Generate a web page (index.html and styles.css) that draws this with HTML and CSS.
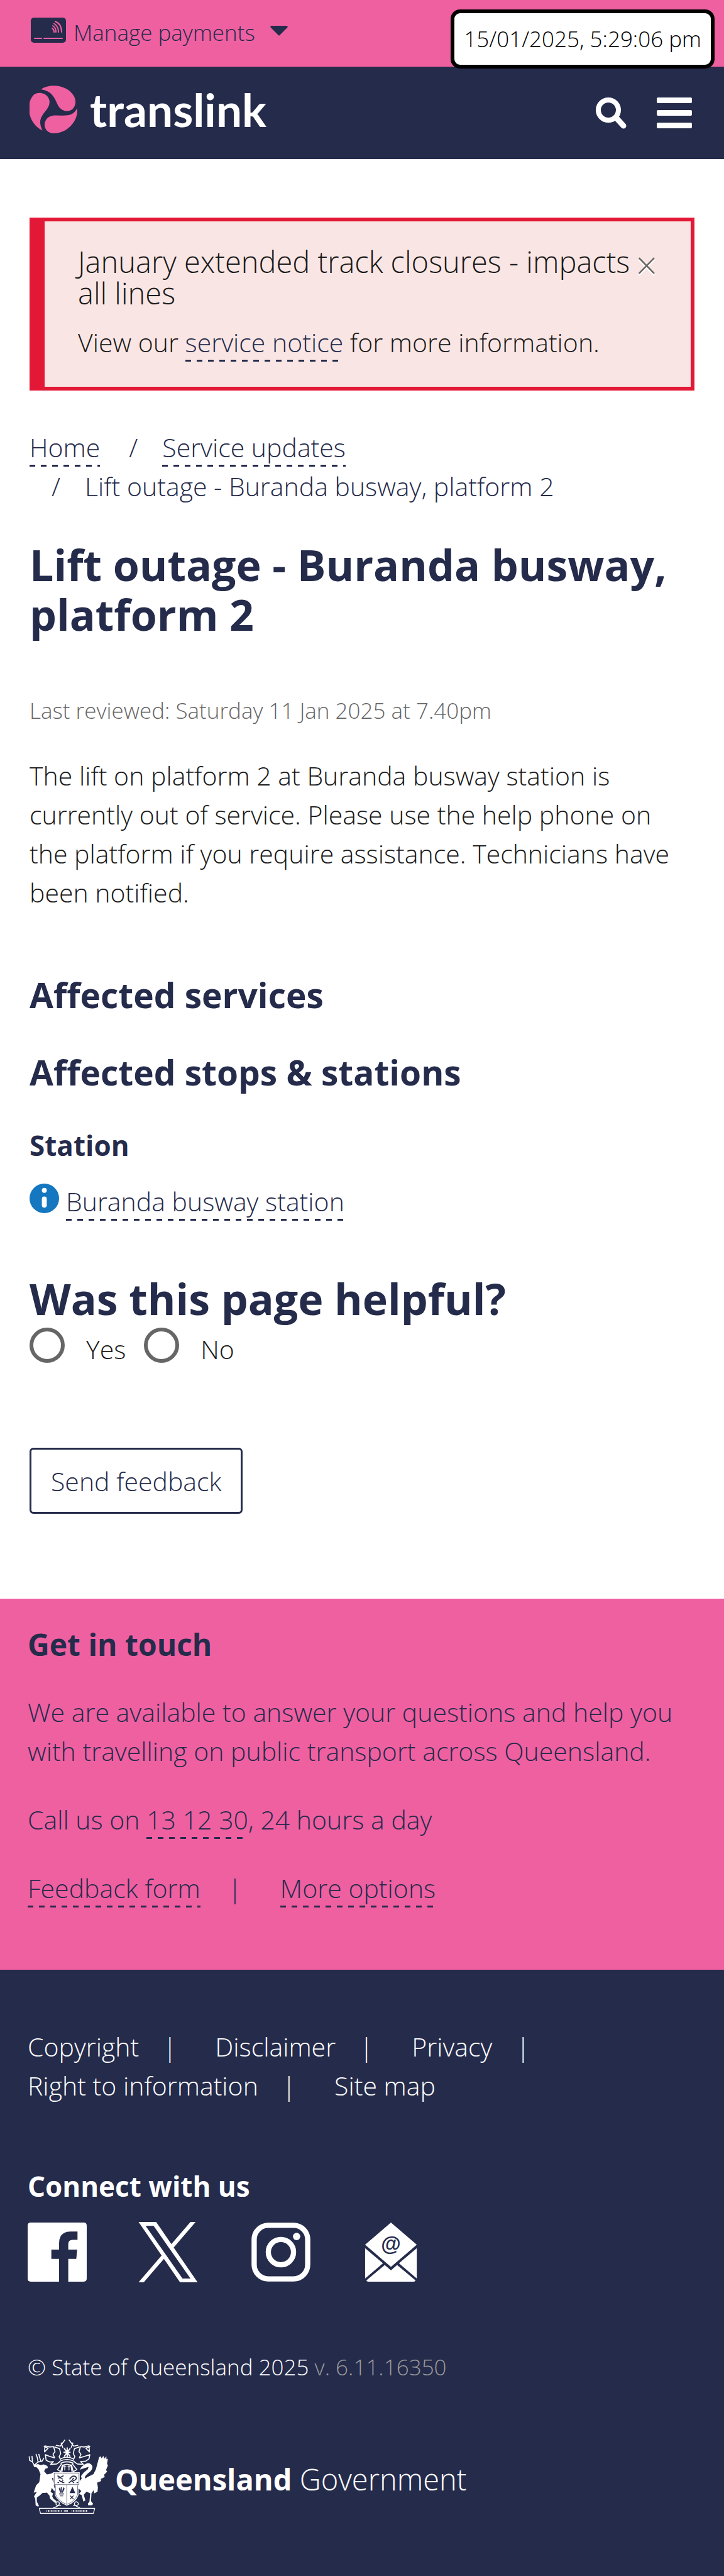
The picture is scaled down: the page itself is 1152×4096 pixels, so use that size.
FILE: index.html
```html
<!DOCTYPE html>
<html lang="en">
<head>
<meta charset="utf-8">
<meta name="viewport" content="width=device-width, initial-scale=1">
<title>Lift outage - Buranda busway, platform 2 | Translink</title>
<link rel="stylesheet" href="styles.css">
</head>
<body>
<div class="clock">15/01/2025, 5:29:06 pm</div>

<div class="topbar">
  <button class="payments" type="button">
    <svg class="payments-card" viewBox="0 0 56 40" aria-hidden="true">
      <rect width="56" height="40" rx="5" fill="#252b4b"/>
      <g fill="none" stroke="#ef60a1" stroke-width="2" stroke-linecap="round">
        <path d="M6 33h11M21 33h29"/>
        <path d="M34 17q3 2 3 6M35 13q5 3 5 10M37 9.500q7 4 7 13.500M39 6q10 4 10 17"/>
      </g>
    </svg>
    <span>Manage payments</span>
    <svg class="payments-caret" viewBox="0 0 28 16" aria-hidden="true"><path d="M2 0h24q3 1 1 3L15 15q-1 1-2 0L1 3q-2-2 1-3z" fill="#252b4b"/></svg>
  </button>
</div>

<header class="header">
  <a class="brand" href="#">
    <svg class="brand-mark" viewBox="23 20 232 232" aria-hidden="true">
      <g fill="#ef60a1">
        <path d="M78 38C125 6 210 18 239 72C253 100 245 125 226 138C205 150 180 143 165 122C150 100 143 46 78 38z"/>
        <path d="M86 238C10 202 4 100 46 63C65 50 97 54 112 75C126 97 121 117 104 140C81 169 62 190 86 238z"/>
        <path d="M254 131C262 190 208 252 140 252C112 251 96 232 96 209C98 186 112 170 137 166C175 160 229 182 254 131z"/>
      </g>
    </svg>
    <span class="brand-name">translink</span>
  </a>
  <nav class="tools">
    <button type="button" class="tool" aria-label="Search">
      <svg class="tool-search" viewBox="0 0 50 50" aria-hidden="true"><circle cx="20" cy="20" r="16" fill="none" stroke="#fff" stroke-width="8"/><path d="M34 34l10 11" stroke="#fff" stroke-width="9" stroke-linecap="round"/></svg>
    </button>
    <button type="button" class="tool" aria-label="Menu">
      <svg class="tool-menu" viewBox="0 0 56 50" aria-hidden="true"><g fill="#fff"><rect width="56" height="9" rx="2"/><rect y="20" width="56" height="9" rx="2"/><rect y="40" width="56" height="9" rx="2"/></g></svg>
    </button>
  </nav>
</header>

<main class="page">
  <section class="alert">
    <div class="alert-text">
      <h2 class="alert-title">January extended track closures - impacts all lines</h2>
      <p>View our <a class="link" href="#">service notice</a> for more information.</p>
    </div>
    <button type="button" class="alert-close" aria-label="Close">×</button>
  </section>

  <nav aria-label="Breadcrumb">
    <ol class="crumbs">
      <li><a class="link" href="#">Home</a></li>
      <li><a class="link" href="#">Service updates</a></li>
      <li>Lift outage - Buranda busway, platform 2</li>
    </ol>
  </nav>

  <h1 class="title">Lift outage - Buranda busway, platform 2</h1>
  <p class="reviewed">Last reviewed: Saturday 11 Jan 2025 at 7.40pm</p>
  <p class="lead">The lift on platform 2 at Buranda busway station is currently out of service. Please use the help phone on the platform if you require assistance. Technicians have been notified.</p>

  <h2 class="heading heading-services">Affected services</h2>
  <h2 class="heading">Affected stops &amp; stations</h2>
  <h3 class="subheading">Station</h3>
  <div class="station">
    <svg class="station-icon" viewBox="0 0 48 48" aria-hidden="true"><circle cx="24" cy="24" r="24" fill="#1477bf"/><circle cx="24" cy="11" r="4" fill="#fff"/><rect x="20" y="21" width="8" height="18" rx="4" fill="#fff"/></svg>
    <p><a class="link" href="#">Buranda busway station</a></p>
  </div>

  <form class="feedback">
    <h2 class="title feedback-title">Was this page helpful?</h2>
    <div class="choices">
      <input class="radio" type="radio" name="helpful" id="yes"><label class="choice" for="yes">Yes</label>
      <input class="radio" type="radio" name="helpful" id="no"><label class="choice" for="no">No</label>
    </div>
    <button class="send" type="button">Send feedback</button>
  </form>
</main>

<section class="contact">
  <h2 class="contact-title">Get in touch</h2>
  <p>We are available to answer your questions and help you with travelling on public transport across Queensland.</p>
  <p>Call us on <a class="link" href="#">13 12 30</a>, 24 hours a day</p>
  <ul class="piped">
    <li><a class="link" href="#">Feedback form</a></li>
    <li><a class="link" href="#">More options</a></li>
  </ul>
</section>

<footer class="footer">
  <ul class="piped">
    <li><a href="#">Copyright</a></li>
    <li><a href="#">Disclaimer</a></li>
    <li><a href="#">Privacy</a></li>
    <li><a href="#">Right to information</a></li>
    <li><a href="#">Site map</a></li>
  </ul>
  <h2 class="subheading connect">Connect with us</h2>
  <div class="social">
    <a href="#" aria-label="Facebook"><svg viewBox="0 0 96 96"><path fill="#fff" d="M5 0h86q5 0 5 5v86q0 5-5 5H66V59h13l1.500-15H66V35q0-7 7-7h8V14.500H70Q51 14.500 51 34v10H38.500v15H51v37H5q-5 0-5-5V5q0-5 5-5z"/></svg></a>
    <a href="#" aria-label="X"><svg viewBox="20 13 1200 1200"><path fill="#fff" d="M714.163 519.284L1160.890 0H1055.030L667.137 450.887L357.328 0H0L468.492 681.821L0 1226.370H105.866L515.491 750.218L842.672 1226.370H1200L714.137 519.284ZM569.165 687.828L521.697 619.934L144.011 79.694H306.615L611.412 515.685L658.880 583.579L1055.080 1150.300H892.476Z"/></svg></a>
    <a href="#" aria-label="Instagram"><svg viewBox="0 0 96 96"><g fill="none" stroke="#fff" stroke-width="8.500"><rect x="4.500" y="4.500" width="87" height="87" rx="23"/><circle cx="48" cy="48" r="20.500"/></g><circle cx="73.500" cy="22.500" r="6" fill="#fff"/></svg></a>
    <a href="#" aria-label="Email"><svg viewBox="-3 0 96 96"><g fill="#fff"><path d="M42 0L84 36L42 72L0 36z"/><path d="M0 41.500L29 66L0 91zM84 41.500L55 66L84 91z"/><path d="M2 94L32 69L42 77.500L52 69L82 94q-1 2-3 2H5q-2 0-3-2z"/></g><text x="42" y="46" class="mail-at">@</text></svg></a>
  </div>
  <p class="legal">© State of Queensland 2025 <span class="version">v. 6.11.16350</span></p>
  <a class="gov" href="#">
    <svg class="gov-arms" viewBox="25 22 395 373" aria-hidden="true">
      <g fill="#fff">
        <path d="M49 152L72 146L84 152L100 148L118 156L120 166L108 170L102 182L116 198L136 194L150 186L150 218L140 214L148 240L152 262L160 282L148 276L140 264L134 284L146 292L142 306L148 318L164 330L158 340L132 318L128 302L116 288L92 290L82 300L66 312L66 332L76 352L72 358L60 350L58 318L52 306L66 284L50 288L62 252L78 236L84 196L74 172L64 162L52 160z"/>
        <path d="M278 174Q290 150 318 142Q338 144 341 160Q342 174 322 190Q300 206 304 218L322 208L346 196L358 172L374 112L382 108L386 118L395 106L399 120L410 108L410 122L417 120L413 146L418 152L408 176L414 184L398 200L402 210L382 220L384 230L364 238L368 262L366 282L350 292L346 276L336 292L334 330L344 342L340 350L320 350L318 342L326 332L330 292L312 282L298 298L306 326L296 332L288 300L274 294L286 280L268 264L270 240L288 218L284 206L298 188L318 172L322 160L304 166z"/>
        <path d="M148 187H278V250H272V300Q260 336 214 352Q170 334 154 298V250H148z"/>
      </g>
      <g fill="none" stroke="#fff" stroke-width="5" stroke-linejoin="round" stroke-linecap="round">
        <path d="M52 150L44 136L30 128L28 110M44 134L42 108M56 150L72 136L68 114L62 98M72 136L92 132L100 118M86 132L78 108L76 98"/>
        <path d="M102 60L122 68L104 86L106 56L130 62L148 60L156 84L146 98L154 116L128 108L108 100L112 128L130 136L148 134L134 148L164 146L180 134"/>
        <path d="M328 60L308 68L326 86L324 56L300 62L282 60L274 84L284 98L276 116L302 108L328 100L324 120L308 132L282 134L296 148L266 146L250 134"/>
        <path d="M154 62L178 70L184 94L176 110L182 122M276 62L252 70L246 94L254 110L248 122M162 54L182 58L204 28M186 42L194 64M268 54L248 58L226 28M244 42L236 64"/>
        <path d="M182 122Q214 102 248 122M180 132Q214 116 250 132M184 142Q214 128 246 142M188 146L168 174L184 184L192 152M242 146L264 174L246 184L238 152M192 156Q214 138 238 156M190 184L196 150M240 184L234 150"/>
        <path d="M200 88H230M216 66V114M202 70L230 108M230 70L202 108" stroke-width="6"/>
        <path d="M204 152V176M198 160H210M225 152V176M219 160H231" stroke-width="4"/>
        <path d="M78 365H352L346 390H84zM148 362Q184 352 176 336Q168 326 160 342Q160 352 184 352M278 362Q244 352 254 336Q264 326 272 342Q272 352 246 352" stroke-width="4"/>
      </g>
      <g fill="none" stroke="#252b4b" stroke-width="4">
        <path d="M152 191H274V248H152zM158 252V296Q172 330 214 346Q256 330 268 296V252M214 250V346" stroke-width="2"/>
        <path d="M168 204L182 212L198 204M170 216Q184 210 194 222M176 226Q188 240 196 226M168 238H176M190 238H202M228 222Q240 200 258 208Q268 222 248 228Q236 220 250 216M224 240L238 228L250 240M262 238H270" stroke-width="5"/>
        <path d="M176 266L184 288L180 262M187 260V288M198 262L192 288L202 266M176 294H200M180 304H196" stroke-width="4"/>
        <path d="M230 302L248 320M248 302L230 320" stroke-width="4"/>
      </g>
      <path d="M228 290L242 258L256 290z" fill="#252b4b"/>
      <path d="M114 378H188M200 378H220M238 378H316" stroke="#fff" stroke-width="8" stroke-dasharray="3 4 6 3"/>
    </svg>
    <span class="gov-name"><b>Queensland</b> Government</span>
  </a>
</footer>
</body>
</html>
```

FILE: styles.css
```css
:root {
  --navy: #252b4b;
  --pink: #ef60a1;
}

* { box-sizing: border-box; }

body {
  position: relative;
  margin: 0;
  background: #fff;
  color: #1a1a1a;
  font: 300 41px/62px "Open Sans", sans-serif;
}

h1, h2, h3, p, ul, ol { margin: 0; padding: 0; }
ul, ol { list-style: none; }
svg { display: block; }
button { margin: 0; padding: 0; border: 0; background: none; font: inherit; color: inherit; }
a { color: inherit; text-decoration: none; }

.link {
  padding-bottom: 3px;
  color: var(--navy);
  background: repeating-linear-gradient(90deg, var(--navy) 0 9px, transparent 9px 18px) left bottom / 100% 3px no-repeat;
}

.clock {
  position: absolute;
  top: 15px;
  right: 15px;
  padding: 18px 15px;
  border: 6px solid #000;
  border-radius: 15px;
  background: #fff;
  color: #000;
  font-size: 35px;
  line-height: 46px;
}

.topbar {
  height: 106px;
  padding: 28px 49px;
  background: var(--pink);
}
.payments {
  display: flex;
  align-items: flex-start;
  gap: 12px;
  color: var(--navy);
  font-size: 35px;
  line-height: 48px;
}
.payments-card { width: 56px; height: 40px; }
.payments-caret { width: 28px; height: 16px; margin: 13px 0 0 12px; }

.header {
  display: flex;
  justify-content: space-between;
  align-items: center;
  height: 147px;
  padding: 0 51px 12px 47px;
  background: var(--navy);
}
.brand { display: flex; align-items: center; gap: 20px; }
.brand-mark { width: 76px; height: 76px; }
.brand-name {
  color: #fff;
  font: 700 73px/76px Lato, sans-serif;
}
.tools { display: flex; align-items: flex-end; gap: 47px; padding-top: 12px; }
.tool-search { width: 50px; height: 50px; }
.tool-menu { width: 56px; height: 50px; }

.page { padding: 93px 47px 135px; }

.alert {
  display: flex;
  align-items: flex-start;
  padding: 39px 53px 40px;
  border: 6px solid #e31836;
  border-left-width: 24px;
  background: #f9e6e4;
}
.alert-text { flex: 1; }
.alert-title {
  margin-bottom: 22px;
  font-size: 47px;
  font-weight: 300;
  line-height: 50px;
}
.alert-close {
  color: #666;
  font-size: 60px;
  line-height: 60px;
  text-shadow: 0 3px 0 #fff;
}

.crumbs {
  display: flex;
  flex-wrap: wrap;
  gap: 0 11px;
  margin-top: 59px;
  color: var(--navy);
}
.crumbs li + li::before {
  content: "/";
  padding: 0 39px 0 35px;
}

.title {
  margin-top: 54px;
  color: var(--navy);
  font: 700 68px/79px "Open Sans", sans-serif;
}
.reviewed {
  margin-top: 88px;
  color: #666;
  font-size: 35px;
  line-height: 52px;
}
.lead { margin-top: 46px; }

.heading {
  margin-top: 57px;
  color: var(--navy);
  font: 700 55px/66px "Open Sans", sans-serif;
}
.heading-services { margin-top: 99px; }
.subheading {
  margin-top: 57px;
  color: var(--navy);
  font: 700 44px/52px "Open Sans", sans-serif;
}
.station {
  display: flex;
  align-items: flex-start;
  gap: 11px;
  margin-top: 32px;
}
.station-icon { width: 47px; height: 47px; margin-top: 3px; }

.feedback-title { margin-top: 84px; }
.choices {
  display: flex;
  align-items: flex-start;
  margin-top: 7px;
}
.radio {
  appearance: none;
  width: 56px;
  height: 56px;
  margin: 0;
  border: 6px solid #666;
  border-radius: 50%;
}
.choice { padding: 3px 29px 0 34px; }
.send {
  height: 105px;
  margin-top: 126px;
  padding: 0 31px;
  border: 3px solid var(--navy);
  border-radius: 6px;
  color: var(--navy);
}

.contact {
  padding: 45px 44px 99px;
  background: var(--pink);
  color: var(--navy);
}
.contact-title {
  margin-bottom: 48px;
  font: 700 48px/56px "Open Sans", sans-serif;
}
.contact p { margin-bottom: 47px; }

.piped {
  display: flex;
  flex-wrap: wrap;
  gap: 0 11px;
}
.piped li:not(:last-child)::after {
  content: "|";
  padding: 0 50px 0 38px;
}
.contact .piped li:not(:last-child)::after { padding-left: 44px; }

.footer {
  padding: 91px 44px 99px;
  background: var(--navy);
  color: #fff;
}
.connect { margin-top: 103px; color: #fff; }
.social {
  display: flex;
  gap: 84px;
  margin-top: 32px;
}
.social svg { width: 94px; height: 94px; overflow: visible; }
.mail-at {
  fill: var(--navy);
  font: 700 33px "Liberation Sans", sans-serif;
  text-anchor: middle;
}
.legal {
  margin-top: 110px;
  font-size: 35px;
  line-height: 52px;
}
.version { color: #999; }
.gov {
  display: flex;
  align-items: center;
  gap: 9px;
  margin-top: 88px;
}
.gov-arms { width: 130px; height: 120px; }
.gov-name {
  padding-top: 8px;
  font-size: 47px;
  line-height: 62px;
}
.gov-name b { font-weight: 700; }
```
